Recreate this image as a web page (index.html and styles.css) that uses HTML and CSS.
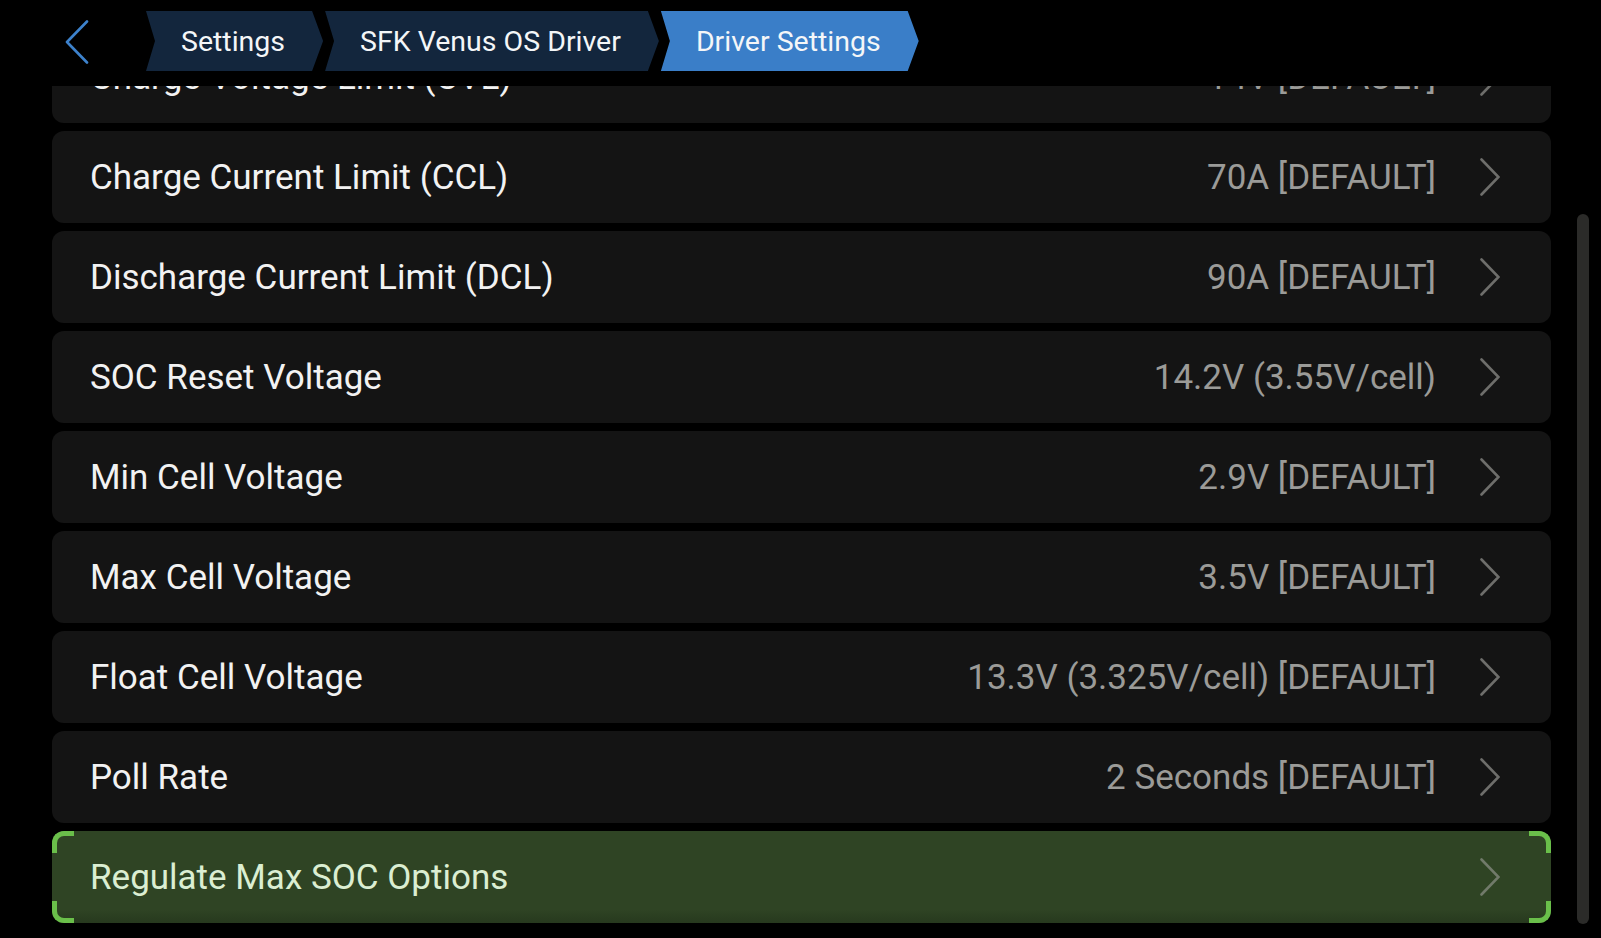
FILE: index.html
```html
<!DOCTYPE html>
<html lang="en">
<head>
    <meta charset="UTF-8">
    <title>Driver Settings</title>
    <link rel="stylesheet" href="styles.css">
</head>
<body>
    <div class="screen">
        <header class="top-bar">
            <button class="back-btn" aria-label="Back">
                <svg width="24" height="44" viewBox="0 0 24 44">
                    <polyline points="22,1.5 2,22 22,42.5" fill="none" stroke="#3d82cc" stroke-width="2.6" stroke-linecap="round" stroke-linejoin="round"/>
                </svg>
            </button>
            <nav class="crumbs">
                <span class="crumb">Settings</span>
                <span class="crumb">SFK Venus OS Driver</span>
                <span class="crumb current">Driver Settings</span>
            </nav>
        </header>

        <div class="list-view">
            <ul class="settings-list">
                <li class="row"><span class="label">Charge Voltage Limit (CVL)</span><span class="value">14V [DEFAULT]</span><span class="arrow"></span></li>
                <li class="row"><span class="label">Charge Current Limit (CCL)</span><span class="value">70A [DEFAULT]</span><span class="arrow"></span></li>
                <li class="row"><span class="label">Discharge Current Limit (DCL)</span><span class="value">90A [DEFAULT]</span><span class="arrow"></span></li>
                <li class="row"><span class="label">SOC Reset Voltage</span><span class="value">14.2V (3.55V/cell)</span><span class="arrow"></span></li>
                <li class="row"><span class="label">Min Cell Voltage</span><span class="value">2.9V [DEFAULT]</span><span class="arrow"></span></li>
                <li class="row"><span class="label">Max Cell Voltage</span><span class="value">3.5V [DEFAULT]</span><span class="arrow"></span></li>
                <li class="row"><span class="label">Float Cell Voltage</span><span class="value">13.3V (3.325V/cell) [DEFAULT]</span><span class="arrow"></span></li>
                <li class="row"><span class="label">Poll Rate</span><span class="value">2 Seconds [DEFAULT]</span><span class="arrow"></span></li>
                <li class="row focused">
                    <span class="label">Regulate Max SOC Options</span><span class="arrow"></span>
                    <!-- focus frame corners -->
                    <span class="corner tl"></span><span class="corner tr"></span>
                    <span class="corner bl"></span><span class="corner br"></span>
                </li>
            </ul>
        </div>

        <div class="scroll-thumb"></div>
    </div>
</body>
</html>
```

FILE: styles.css
```css
* {
    margin: 0;
    padding: 0;
    box-sizing: border-box;
}

body {
    background: #000;
    font-family: Roboto, "Noto Sans", sans-serif;
    color: #f2f2f2;
    overflow: hidden;
}

.screen {
    position: relative;
    width: 1601px;
    height: 938px;
    display: flex;
    flex-direction: column;
}

/* Top bar with breadcrumbs */
.top-bar {
    height: 86px;
    flex-shrink: 0;
    display: flex;
    align-items: flex-start;
    padding: 11px 0 0 65px;
    background: #000;
}

.back-btn {
    background: none;
    border: none;
    width: 81px;
    height: 60px;
    display: flex;
    align-items: center;
    justify-content: flex-start;
}

.back-btn svg {
    display: block;
    margin-top: 1px;
}

.crumbs {
    display: flex;
    gap: 2px;
}

.crumb {
    height: 60px;
    display: flex;
    align-items: center;
    padding: 0 38px 0 35px;
    font-size: 28.5px;
    color: #f4f6f8;
    background: #13263d;
    clip-path: polygon(0 0, calc(100% - 11px) 0, 100% 50%, calc(100% - 11px) 100%, 0 100%, 9px 50%);
}

.crumb.current {
    background: #3a7ec8;
}

/* Settings list */
.list-view {
    flex: 1;
    overflow: hidden;
}

.settings-list {
    list-style: none;
    display: flex;
    flex-direction: column;
    gap: 8px;
    margin-top: -55px;
    padding: 0 50px 0 52px;
}

.row {
    position: relative;
    height: 92px;
    display: flex;
    align-items: center;
    padding: 0 51px 0 38px;
    background: #141414;
    border-radius: 12px;
    font-size: 35px;
}

.label {
    flex: 1;
    white-space: nowrap;
}

.value {
    color: #9b9b98;
    white-space: nowrap;
}

.arrow {
    width: 20px;
    height: 38px;
    margin-left: 44px;
    background: url('data:image/svg+xml,%3Csvg xmlns="http://www.w3.org/2000/svg" viewBox="0 0 20 38"%3E%3Cpolyline points="1.5,1.5 18.5,19 1.5,36.5" fill="none" stroke="%236e6e6b" stroke-width="2.6" stroke-linecap="round"/%3E%3C/svg%3E') no-repeat center;
}

.row.focused {
    background: linear-gradient(to bottom, #2f4424 0%, #2f4424 85%, #27391e 100%);
}

.row.focused .label {
    color: #dbeed2;
}

.row.focused .arrow {
    background: url('data:image/svg+xml,%3Csvg xmlns="http://www.w3.org/2000/svg" viewBox="0 0 20 38"%3E%3Cpolyline points="1.5,1.5 18.5,19 1.5,36.5" fill="none" stroke="%23717a6a" stroke-width="2.6" stroke-linecap="round"/%3E%3C/svg%3E') no-repeat center;
}

.corner {
    position: absolute;
    width: 22px;
    height: 22px;
    border: 0 solid #6abf4a;
}

.corner.tl {
    top: 0;
    left: 0;
    border-top-width: 5px;
    border-left-width: 5px;
    border-top-left-radius: 12px;
}

.corner.tr {
    top: 0;
    right: 0;
    border-top-width: 5px;
    border-right-width: 5px;
    border-top-right-radius: 12px;
}

.corner.bl {
    bottom: 0;
    left: 0;
    border-bottom-width: 5px;
    border-left-width: 5px;
    border-bottom-left-radius: 12px;
}

.corner.br {
    bottom: 0;
    right: 0;
    border-bottom-width: 5px;
    border-right-width: 5px;
    border-bottom-right-radius: 12px;
}

/* scroll indicator overlay */
.scroll-thumb {
    position: absolute;
    left: 1577px;
    top: 214px;
    width: 12px;
    height: 710px;
    border-radius: 6px;
    background: #2b2b29;
}
```
